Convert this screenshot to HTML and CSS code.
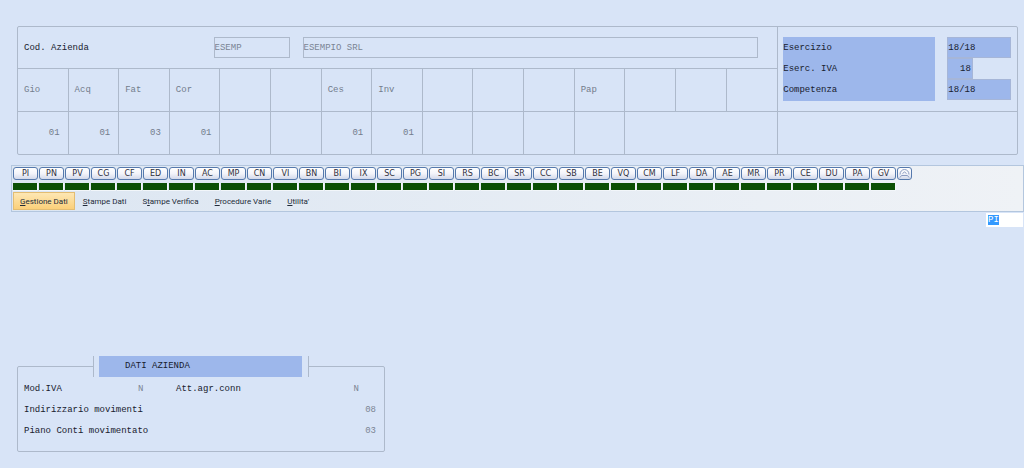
FILE: index.html
```html
<!DOCTYPE html>
<html lang="it">
<head>
<meta charset="utf-8">
<title>Gestione Azienda</title>
<link rel="stylesheet" href="styles.css">
</head>
<body>
<main class="screen">
  <section class="summary">
    <div class="summary-main">
      <div class="company">
        <label class="company-label" for="code">Cod. Azienda</label>
        <input class="field field-code" id="code" value="ESEMP" readonly>
        <input class="field field-name" aria-label="Ragione sociale" value="ESEMPIO SRL" readonly>
      </div>
      <table class="ledger">
        <tr><th>Gio</th><th>Acq</th><th>Fat</th><th>Cor</th><th></th><th></th><th>Ces</th><th>Inv</th><th></th><th></th><th></th><th>Pap</th><th></th><th></th><th></th></tr>
        <tr><td>01</td><td>01</td><td>03</td><td>01</td><td></td><td></td><td>01</td><td>01</td><td></td><td></td><td></td><td></td><td colspan="3"></td></tr>
      </table>
    </div>
    <div class="summary-side">
      <div class="periods">
        <div class="period-labels">
          <label for="year">Esercizio</label>
          <label for="vat">Eserc. IVA</label>
          <label for="accrual">Competenza</label>
        </div>
        <div class="period-values">
          <input class="period" id="year" value="18/18" readonly>
          <input class="period period-short" id="vat" value="18" readonly>
          <input class="period" id="accrual" value="18/18" readonly>
        </div>
      </div>
      <div class="side-empty"></div>
    </div>
  </section>

  <section class="toolbar">
    <div class="modules">
      <div class="module"><button>PI</button><i></i></div>
      <div class="module"><button>PN</button><i></i></div>
      <div class="module"><button>PV</button><i></i></div>
      <div class="module"><button>CG</button><i></i></div>
      <div class="module"><button>CF</button><i></i></div>
      <div class="module"><button>ED</button><i></i></div>
      <div class="module"><button>IN</button><i></i></div>
      <div class="module"><button>AC</button><i></i></div>
      <div class="module"><button>MP</button><i></i></div>
      <div class="module"><button>CN</button><i></i></div>
      <div class="module"><button>VI</button><i></i></div>
      <div class="module"><button>BN</button><i></i></div>
      <div class="module"><button>BI</button><i></i></div>
      <div class="module"><button>IX</button><i></i></div>
      <div class="module"><button>SC</button><i></i></div>
      <div class="module"><button>PG</button><i></i></div>
      <div class="module"><button>SI</button><i></i></div>
      <div class="module"><button>RS</button><i></i></div>
      <div class="module"><button>BC</button><i></i></div>
      <div class="module"><button>SR</button><i></i></div>
      <div class="module"><button>CC</button><i></i></div>
      <div class="module"><button>SB</button><i></i></div>
      <div class="module"><button>BE</button><i></i></div>
      <div class="module"><button>VQ</button><i></i></div>
      <div class="module"><button>CM</button><i></i></div>
      <div class="module"><button>LF</button><i></i></div>
      <div class="module"><button>DA</button><i></i></div>
      <div class="module"><button>AE</button><i></i></div>
      <div class="module"><button>MR</button><i></i></div>
      <div class="module"><button>PR</button><i></i></div>
      <div class="module"><button>CE</button><i></i></div>
      <div class="module"><button>DU</button><i></i></div>
      <div class="module"><button>PA</button><i></i></div>
      <div class="module"><button>GV</button><i></i></div>
      <div class="module module-icon"><button aria-label="Comprimi"><svg viewBox="0 0 11 9" width="11" height="9" fill="none" stroke="#8b9bc0"><path d="M1 5.500C1 2.500 3 .5 5.500 .5S10 2.500 10 5.500M3.500 4.500l2-1.500 2 1.500M1 8.500l1.500-2h6l1.500 2"/></svg></button></div>
    </div>
    <nav class="menu">
      <button class="menu-item active"><u>G</u>estione Dati</button>
      <button class="menu-item"><u>S</u>tampe Dati</button>
      <button class="menu-item">S<u>t</u>ampe Verifica</button>
      <button class="menu-item"><u>P</u>rocedure Varie</button>
      <button class="menu-item"><u>U</u>tilita'</button>
    </nav>
  </section>
  <div class="command-row"><input class="command" aria-label="Comando" value="PI"></div>

  <fieldset class="details">
    <legend><span class="details-title">DATI AZIENDA</span></legend>
    <dl class="detail-row">
      <dt class="detail-mod">Mod.IVA</dt><dd class="detail-flag">N</dd>
      <dt>Att.agr.conn</dt><dd class="detail-end">N</dd>
    </dl>
    <dl class="detail-row"><dt>Indirizzario movimenti</dt><dd>08</dd></dl>
    <dl class="detail-row"><dt>Piano Conti movimentato</dt><dd>03</dd></dl>
  </fieldset>
</main>
<script src="app.js"></script>
</body>
</html>
```
FILE: styles.css
```css
* { box-sizing: border-box; }

body {
  margin: 0;
  background: #d8e4f7;
  color: #17202e;
}

body, input {
  font: 9px/21px "Liberation Mono", monospace;
}

.screen { padding-top: 26px; }

.summary {
  display: grid;
  grid-template-columns: 76fr 24fr;
  margin: 0 6px 0 17px;
  border: 1px solid #adb9cb;
  border-radius: 2px;
}

.company {
  display: flex;
  align-items: center;
  height: 41px;
  padding: 0 19px 0 6px;
}

.company-label { flex: 0 0 25%; margin-right: 6px; padding-top: 2px; }

.field {
  height: 21px;
  padding: 2px 0 0;
  border: 1px solid #adb9cb;
  background: transparent;
  color: #7b8494;
  outline: 0;
}

.field-code { width: 76px; margin-right: 13px; }
.field-name { flex: 1; min-width: 0; }

.ledger {
  width: 100%;
  table-layout: fixed;
  border-spacing: 0;
  color: #737c8c;
}

.ledger th, .ledger td {
  height: 43px;
  padding: 1px 8px 0 6px;
  border-top: 1px solid #adb9cb;
  border-right: 1px solid #adb9cb;
  font-weight: normal;
  text-align: left;
}

.ledger td { text-align: right; }
.ledger th:last-child, .ledger td:last-child { border-right: 0; }

.summary-side { border-left: 1px solid #adb9cb; }

.periods {
  display: flex;
  gap: 12px;
  height: 84px;
  padding: 10px 6px 0 5px;
}

.period-labels {
  display: flex;
  flex-direction: column;
  flex: 153;
  height: 64px;
  padding-top: 1px;
  background: #9db7eb;
}

.period-values {
  display: flex;
  flex-direction: column;
  flex: 64;
}

.period {
  width: 100%;
  height: 21px;
  padding: 2px 0 0;
  border: 1px solid #a6b6d8;
  background: #9db7eb;
  color: #17202e;
  outline: 0;
}

.period-short { width: 40%; padding-right: 1px; text-align: right; }
.side-empty { height: 43px; border-top: 1px solid #adb9cb; }

.toolbar {
  margin: 10px 0 0 11px;
  padding: 1px;
  border: 1px solid #b3c6de;
  background: linear-gradient(90deg, #dce6f2, #eff2f6);
}

.modules { display: flex; gap: 1px; }
.module { width: 25px; }

.module button {
  display: flex;
  align-items: center;
  justify-content: center;
  width: 100%;
  height: 13px;
  padding: 0;
  border: 1px solid #5579ad;
  border-radius: 3px;
  background: linear-gradient(#ffffff, #f3f4fa 50%, #d3d9ea);
  color: #30303c;
  font: 8px/11px "DejaVu Sans", sans-serif;
}

.module i {
  display: block;
  height: 8px;
  margin: 3px 0 0;
  border: solid #f2f6fa;
  border-width: 0 1px 1px 0;
  background: #0b4f04;
}

.module-icon { width: 15px; }
.module-icon i { display: none; }

.menu { display: flex; margin-top: 1px; }

.menu-item {
  height: 18px;
  padding: 1px 7px 0;
  border: 1px solid transparent;
  background: none;
  color: #222b38;
  font: 8px/16px Roboto, sans-serif;
}

.menu-item.active {
  padding: 1px 6px 0;
  border-color: #e3bd72;
  background: linear-gradient(#fde7b4, #fbd07a);
}

.command-row { display: flex; justify-content: flex-end; padding: 1px 1px 0 0; }

.command {
  width: 37px;
  height: 14px;
  padding: 0 2px;
  border: 0;
  outline: 0;
  background: #fff;
  line-height: 12px;
  caret-color: transparent;
}

.command::selection { background: #3399ff; color: #fff; }

.details {
  width: 36%;
  min-width: 340px;
  max-width: 368px;
  margin: 129px 0 0 17px;
  padding: 2px 8px 9px 6px;
  border: 1px solid #adb9cb;
  border-radius: 2px;
}

.details legend {
  width: 216px;
  margin-left: 69px;
  padding: 0 6px 0 5px;
  border: solid #adb9cb;
  border-width: 0 1px;
}

.details-title {
  display: block;
  padding-left: 26px;
  background: #9db7eb;
}

.detail-row { display: flex; justify-content: space-between; margin: 0; }
.detail-row dd { margin: 0; color: #7b8494; }
.detail-row .detail-mod { width: 114px; }
.detail-row .detail-flag { width: 38px; }
.detail-row .detail-end { margin: 0 17px 0 auto; }
```
FILE: app.js
```js
const command = document.querySelector(".command");
command.focus();
command.select();
```
